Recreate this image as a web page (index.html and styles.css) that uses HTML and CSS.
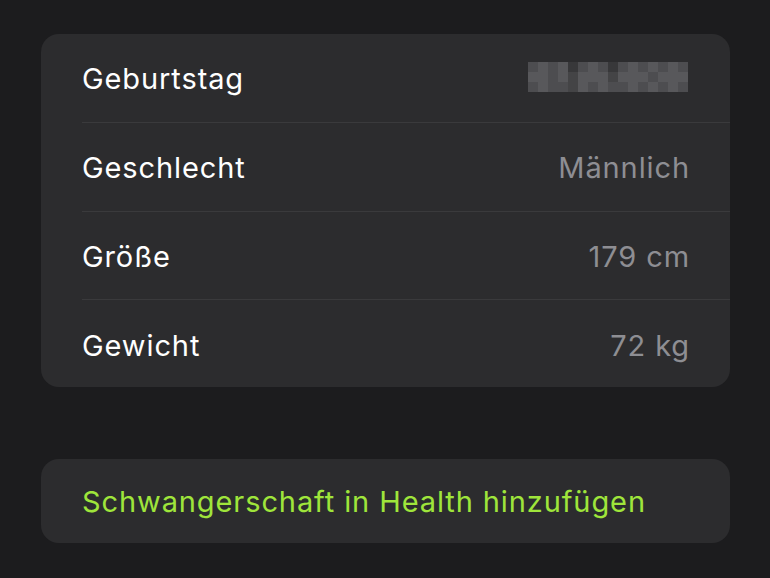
FILE: index.html
```html
<!DOCTYPE html>
<html lang="de">
<head>
<meta charset="utf-8">
<link rel="stylesheet" href="styles.css">
</head>
<body>
<main class="page">
  <section class="card">
    <div class="row">
      <span class="label">Geburtstag</span>
      <div class="mosaic" aria-label="verpixelt">
        <i class="c2"></i><i class="c3"></i><i class="c2"></i><i class="c3"></i><i class="c0"></i><i class="c2"></i><i class="c3"></i><i class="c2"></i><i class="c0"></i><i class="c2"></i><i class="c3"></i><i class="c2"></i><i class="c3"></i><i class="c2"></i><i class="c3"></i><i class="c2"></i>
        <i class="c3"></i><i class="c3"></i><i class="c2"></i><i class="c3"></i><i class="c1"></i><i class="c3"></i><i class="c3"></i><i class="c3"></i><i class="c1"></i><i class="c3"></i><i class="c3"></i><i class="c3"></i><i class="c2"></i><i class="c3"></i><i class="c3"></i><i class="c3"></i>
        <i class="c2"></i><i class="c3"></i><i class="c2"></i><i class="c2"></i><i class="c1"></i><i class="c3"></i><i class="c2"></i><i class="c3"></i><i class="c2"></i><i class="c2"></i><i class="c3"></i><i class="c2"></i><i class="c3"></i><i class="c2"></i><i class="c3"></i><i class="c2"></i>
      </div>
    </div>
    <div class="row">
      <span class="label">Geschlecht</span>
      <span class="value">Männlich</span>
    </div>
    <div class="row">
      <span class="label">Größe</span>
      <span class="value">179 cm</span>
    </div>
    <div class="row">
      <span class="label">Gewicht</span>
      <span class="value">72 kg</span>
    </div>
  </section>
  <section class="card action">
    <span class="link">Schwangerschaft in Health hinzufügen</span>
  </section>
</main>
</body>
</html>
```
FILE: styles.css
```css
html, body {
  margin: 0;
  padding: 0;
  background: #1c1c1e;
}
body {
  width: 770px;
  height: 578px;
  overflow: hidden;
  font-family: Inter, "Noto Sans", sans-serif;
  -webkit-font-smoothing: antialiased;
}
.page {
  padding: 34px 40px 0 41px;
  display: flex;
  flex-direction: column;
  gap: 72px;
}
.card {
  background: #2c2c2e;
  border-radius: 18px;
  padding-left: 41px;
}
.row {
  height: 89px;
  display: flex;
  align-items: center;
  justify-content: space-between;
  padding-right: 41px;
  border-bottom: 1px solid #3a3a3c;
  box-sizing: border-box;
}
.row:nth-child(2) { padding-top: 1px; }
.row:nth-child(3) { height: 88px; padding-top: 2px; }
.row:last-child {
  height: 87px;
  padding-top: 3px;
  border-bottom: none;
}
.label,
.value,
.link {
  font-size: 29px;
  letter-spacing: 0.9px;
}
.label {
  color: #ffffff;
}
.value {
  color: #8e8e93;
  margin-right: -1px;
}
.mosaic {
  display: grid;
  grid-template-columns: repeat(16, 10px);
  grid-auto-rows: 10px;
  margin-top: -2px;
  margin-right: 1px;
}
.mosaic i { display: block; }
.c0 { background: #38383a; }
.c1 { background: #444446; }
.c2 { background: #4d4d50; }
.c3 { background: #58585b; }
.action {
  height: 84px;
  display: flex;
  align-items: center;
}
.link {
  color: #9fe53b;
}
```
